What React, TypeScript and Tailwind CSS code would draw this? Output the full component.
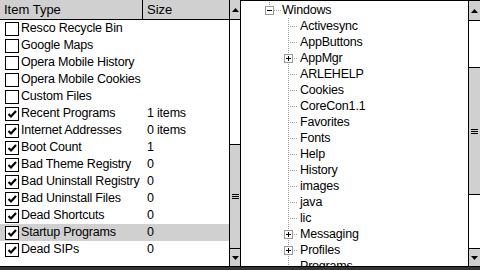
import React from "react";

const rows: { name: string; size: string; checked: boolean; sel?: boolean }[] = [
  { name: "Resco Recycle Bin", size: "", checked: false },
  { name: "Google Maps", size: "", checked: false },
  { name: "Opera Mobile History", size: "", checked: false },
  { name: "Opera Mobile Cookies", size: "", checked: false },
  { name: "Custom Files", size: "", checked: false },
  { name: "Recent Programs", size: "1 items", checked: true },
  { name: "Internet Addresses", size: "0 items", checked: true },
  { name: "Boot Count", size: "1", checked: true },
  { name: "Bad Theme Registry", size: "0", checked: true },
  { name: "Bad Uninstall Registry", size: "0", checked: true },
  { name: "Bad Uninstall Files", size: "0", checked: true },
  { name: "Dead Shortcuts", size: "0", checked: true },
  { name: "Startup Programs", size: "0", checked: true, sel: true },
  { name: "Dead SIPs", size: "0", checked: true },
];

const tree: { name: string; plus?: boolean }[] = [
  { name: "Activesync" },
  { name: "AppButtons" },
  { name: "AppMgr", plus: true },
  { name: "ARLEHELP" },
  { name: "Cookies" },
  { name: "CoreCon1.1" },
  { name: "Favorites" },
  { name: "Fonts" },
  { name: "Help" },
  { name: "History" },
  { name: "images" },
  { name: "java" },
  { name: "lic" },
  { name: "Messaging", plus: true },
  { name: "Profiles", plus: true },
  { name: "Programs" },
];

function Check({ checked }: { checked: boolean }) {
  return (
    <div className="w-[14px] h-[14px] border border-black bg-white shrink-0 relative">
      {checked && (
        <svg width="12" height="12" className="absolute left-0 top-0">
          <polyline points="2.5,6 5,8.5 10,3" fill="none" stroke="black" strokeWidth="2.2" />
        </svg>
      )}
    </div>
  );
}

function Up() {
  return (
    <svg width="7" height="4">
      <polygon points="3.5,0 7,4 0,4" fill="black" />
    </svg>
  );
}
function Down() {
  return (
    <svg width="7" height="4">
      <polygon points="0,0 7,0 3.5,4" fill="black" />
    </svg>
  );
}
function Grip() {
  return (
    <svg width="7" height="5">
      <line x1="0" y1="0.5" x2="7" y2="0.5" stroke="black" />
      <line x1="0" y1="2.5" x2="7" y2="2.5" stroke="black" />
      <line x1="0" y1="4.5" x2="7" y2="4.5" stroke="black" />
    </svg>
  );
}

function Box({ cx, cy, plus }: { cx: number; cy: number; plus: boolean }) {
  return (
    <g>
      <rect x={cx - 4 + 0.5} y={cy - 4 + 0.5} width="8" height="8" fill="white" stroke="#999" />
      <line x1={cx - 2} y1={cy + 0.5} x2={cx + 3} y2={cy + 0.5} stroke="black" />
      {plus && <line x1={cx + 0.5} y1={cy - 2} x2={cx + 0.5} y2={cy + 3} stroke="black" />}
    </g>
  );
}

export default function App() {
  const font = { fontFamily: '"Liberation Sans", Arial, sans-serif' };
  return (
    <div className="w-[480px] h-[270px] flex flex-col bg-white text-black text-[12px] leading-none overflow-hidden" style={font}>
      <div className="flex h-[266px]">
        {/* Left panel */}
        <div className="w-[240px] flex">
          <div className="w-[229px] flex flex-col">
            <div className="h-[20px] flex bg-[#d0d0d0] border-b border-black shrink-0">
              <div className="w-[143px] border-r border-black flex items-center pl-[4px] text-[13px]">Item Type</div>
              <div className="flex items-center pl-[4px] text-[13px]">Size</div>
            </div>
            {rows.map((r) => (
              <div key={r.name} className={`flex h-[17px] items-center text-[12.5px] tracking-[-0.2px] ${r.sel ? "bg-[#d0d0d0]" : ""}`}>
                <div className="w-[143px] flex items-center pl-[5px] gap-[2px] whitespace-nowrap">
                  <Check checked={r.checked} />
                  <span>{r.name}</span>
                </div>
                <span className="pl-[4px] whitespace-nowrap">{r.size}</span>
              </div>
            ))}
          </div>
          <div className="w-[11px] border-l border-black flex flex-col">
            <div className="h-[20px] bg-[#d0d0d0] border-b border-black flex items-center justify-center shrink-0">
              <Up />
            </div>
            <div className="h-[124px] bg-white shrink-0" />
            <div className="h-[105px] bg-[#d0d0d0] border-t border-b border-black flex items-center justify-center shrink-0">
              <Grip />
            </div>
            <div className="flex-1 bg-[#d0d0d0] flex items-center justify-center">
              <Down />
            </div>
          </div>
        </div>
        {/* Right panel */}
        <div className="w-[240px] flex border-l border-t border-black">
          <div className="w-[227px] flex flex-col pt-[1px] text-[12.5px] tracking-[-0.2px]">
            <div className="flex h-[16px] items-center">
              <svg width="41" height="16" className="shrink-0">
                <line x1="28.5" y1="0" x2="28.5" y2="4" stroke="#999" strokeDasharray="1 1" />
                <Box cx={28} cy={8} plus={false} />
                <line x1="33" y1="8.5" x2="41" y2="8.5" stroke="#999" strokeDasharray="1 1" />
              </svg>
              <span className="whitespace-nowrap">Windows</span>
            </div>
            {tree.map((t) => (
              <div key={t.name} className="flex h-[16px] items-center shrink-0">
                <svg width="59" height="16" className="shrink-0">
                  <line x1="47.5" y1="0" x2="47.5" y2="16" stroke="#999" strokeDasharray="1 1" />
                  <line x1="49" y1="8.5" x2="57" y2="8.5" stroke="#999" strokeDasharray="1 1" />
                  {t.plus && <Box cx={47} cy={8} plus={true} />}
                </svg>
                <span className="whitespace-nowrap">{t.name}</span>
              </div>
            ))}
          </div>
          <div className="w-[12px] border-l border-black flex flex-col">
            <div className="h-[20px] bg-[#d0d0d0] border-b border-black flex items-center justify-center shrink-0">
              <Up />
            </div>
            <div className="h-[46px] bg-white shrink-0" />
            <div className="h-[128px] bg-[#d0d0d0] border-t border-b border-black flex items-center justify-center shrink-0">
              <Grip />
            </div>
            <div className="h-[53px] bg-white shrink-0" />
            <div className="flex-1 bg-[#d0d0d0] border-t border-black flex items-center justify-center">
              <Down />
            </div>
          </div>
        </div>
      </div>
      <div className="flex-1 bg-[#333] border-t border-black" />
    </div>
  );
}
